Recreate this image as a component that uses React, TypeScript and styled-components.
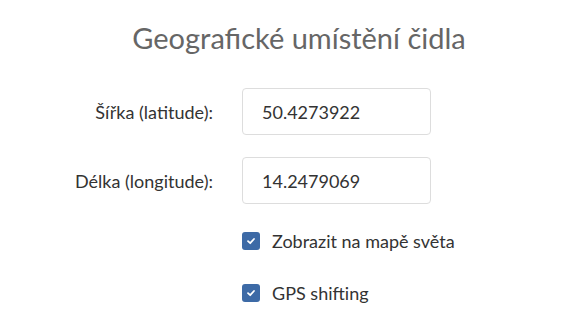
import React from "react";
import styled, { createGlobalStyle } from "styled-components";

const Global = createGlobalStyle`
  body {
    margin: 0;
    background: #fff;
    font-family: Lato, "Open Sans", sans-serif;
    color: #333;
  }
`;

const Page = styled.div`
  width: 586px;
  padding-top: 20px;
`;

const Title = styled.h2`
  margin: 0 0 32px;
  padding-left: 12px;
  text-align: center;
  font-size: 29px;
  font-weight: 400;
  color: #666;
  line-height: 36px;
`;

const Form = styled.div`
  display: grid;
  grid-template-columns: 213px 189px;
  column-gap: 29px;
  row-gap: 22px;
  align-items: center;
`;

const Label = styled.label`
  text-align: right;
  font-size: 18px;
  color: #333;
`;

const Input = styled.input`
  box-sizing: border-box;
  width: 189px;
  height: 47px;
  padding: 0 19px;
  border: 1px solid #ddd;
  border-radius: 4px;
  font-family: inherit;
  font-size: 18px;
  color: #333;
  outline: none;
`;

const Checks = styled.div`
  display: flex;
  flex-direction: column;
  gap: 32px;
  margin: 27px 0 0 242px;
`;

const CheckRow = styled.label`
  display: flex;
  align-items: center;
  gap: 12px;
  font-size: 18px;
  color: #333;
  line-height: 20px;
`;

const Box = styled.span`
  width: 18px;
  height: 18px;
  border-radius: 3px;
  background: #3d6aa6;
  display: flex;
  align-items: center;
  justify-content: center;
`;

const Check = () => (
  <Box>
    <svg width="10" height="10" viewBox="0 0 10 10">
      <path d="M2 5.2 L4.2 7.2 L8 3" fill="none" stroke="#fff" strokeWidth="1.8" strokeLinecap="round" strokeLinejoin="round" />
    </svg>
  </Box>
);

export default function App() {
  return (
    <Page>
      <Global />
      <Title>Geografické umístění čidla</Title>
      <Form>
        <Label>Šířka (latitude):</Label>
        <Input defaultValue="50.4273922" />
        <Label>Délka (longitude):</Label>
        <Input defaultValue="14.2479069" />
      </Form>
      <Checks>
        <CheckRow>
          <Check />
          Zobrazit na mapě světa
        </CheckRow>
        <CheckRow>
          <Check />
          GPS shifting
        </CheckRow>
      </Checks>
    </Page>
  );
}
